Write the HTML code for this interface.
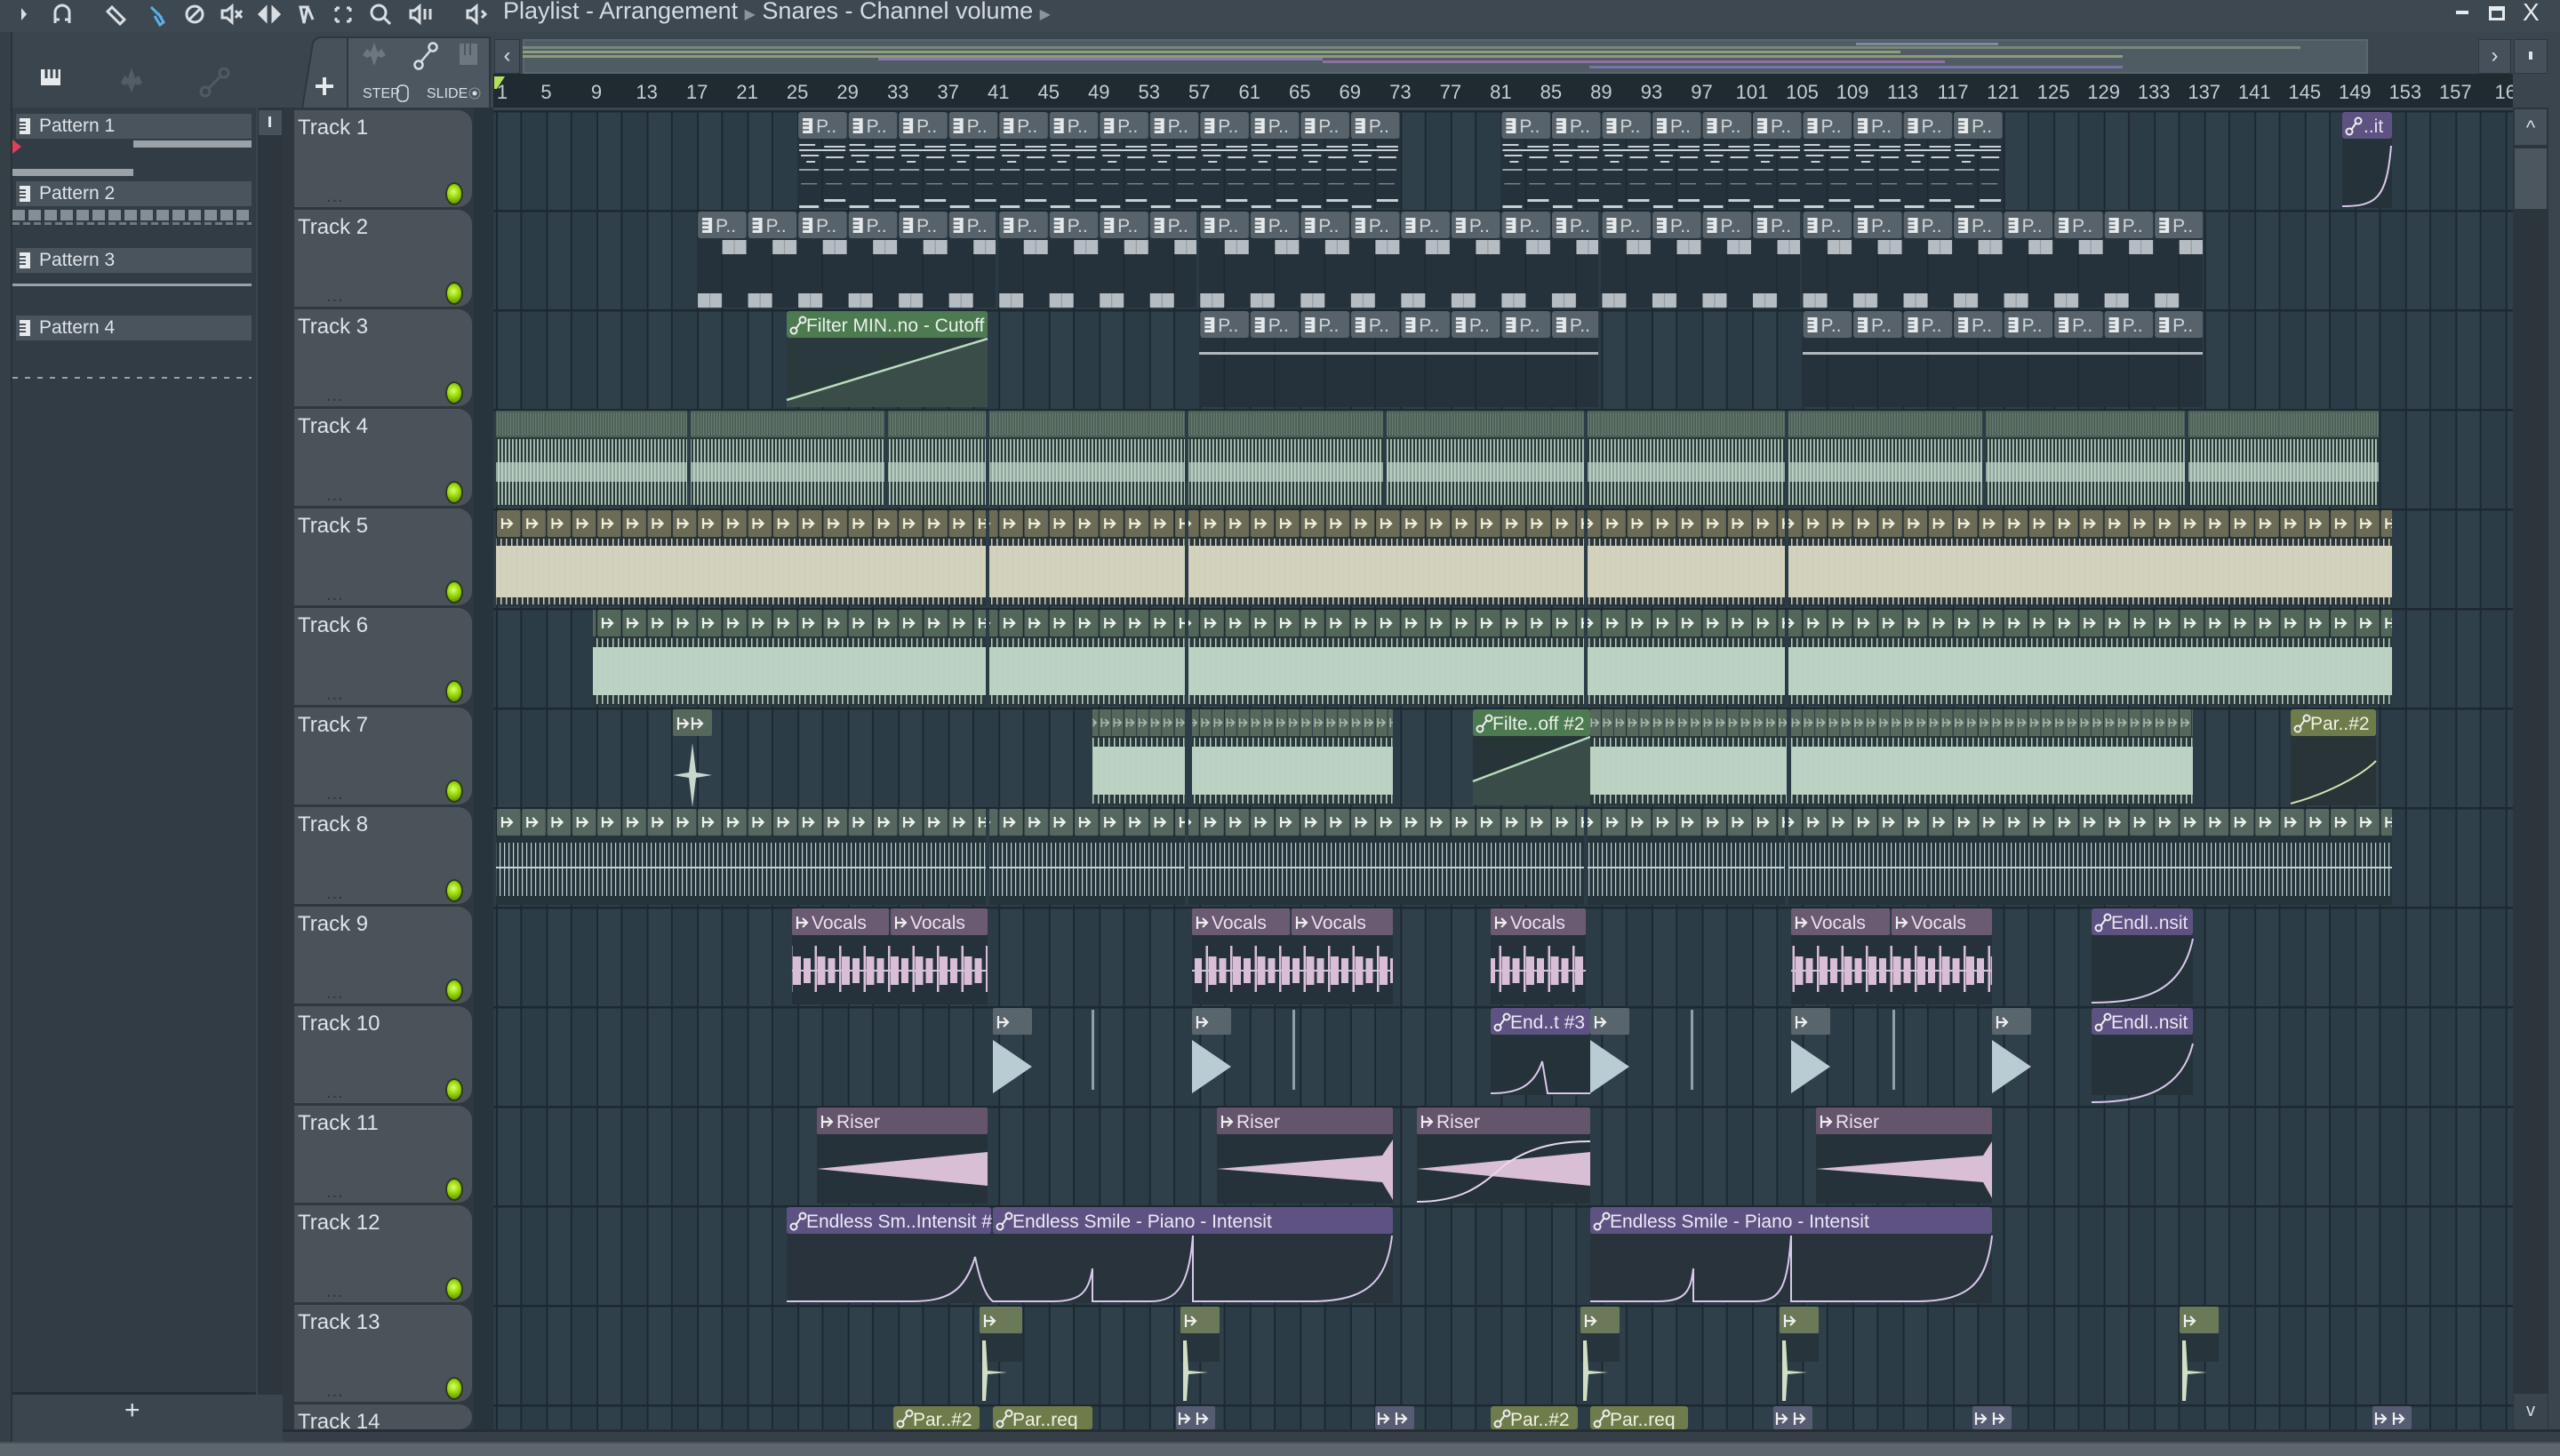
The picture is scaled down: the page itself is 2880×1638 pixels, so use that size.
<!DOCTYPE html>
<html><head><meta charset="utf-8">
<style>
*{box-sizing:border-box}
body{margin:0;width:2880px;height:1638px;overflow:hidden;background:#3b454d;font-family:"Liberation Sans Narrow","Liberation Sans",sans-serif;position:relative}
.abs{position:absolute}
.th{position:absolute;left:331px;width:200px;height:109px;background:#4b535a;border-radius:0 16px 16px 0;color:#dde3e7;font-size:24px;padding:6px 0 0 4px}
.th .led{position:absolute;right:10px;top:81px;width:20px;height:26px;border-radius:50%;background:radial-gradient(circle at 45% 40%,#d8ff70 0,#96d400 45%,#4c7a00 100%);border:2px solid #2c3a22}
.th .dots{position:absolute;left:36px;top:86px;color:#2e363c;font-size:20px;letter-spacing:1px}
.pn{position:absolute;left:18px;width:265px;height:28px;background:#4a545c;color:#dde3e7;font-size:21px;line-height:28px;padding-left:26px}
.pn:before{content:"";position:absolute;left:4px;top:5px;width:12px;height:18px;background:#e6eaec;box-shadow:inset 6px 0 0 -1px #e6eaec}
.pn i{position:absolute;left:4px;top:9px;width:7px;height:2px;background:#4a545c;box-shadow:0 4px 0 #4a545c,0 8px 0 #4a545c}
</style></head><body>

<!-- title bar -->
<div class="abs" style="left:0;top:0;width:2880px;height:36px;background:#3e4850"></div>
<svg class="abs" style="left:0;top:0" width="560" height="36" fill="none" stroke="#d8dee2" stroke-width="3">
<path d="M24 9l6 7-6 7" fill="#d8dee2" stroke="none"/>
<path d="M62 26V14a8 8 0 0 1 16 0v12M62 22h5M73 22h5"/>
<path d="M126 8l14 14-5 5-14-14zM121 13l5-5"/>
<path d="M170 8l12 12M174 18l6 10 4-3-6-10" stroke="#5ab0e8"/>
<circle cx="219" cy="16" r="9"/><path d="M213 22l12-12"/>
<path d="M250 12h5l6-5v18l-6-5h-5zM265 12l7 8M272 12l-7 8"/>
<path d="M292 16l7-7v14zM314 16l-7-7v14z" fill="#d8dee2"/>
<path d="M338 8h8l-4 18zM346 8l6 14"/>
<path d="M378 9h4M378 9v4M394 9h-4M394 9v4M378 24h4M378 24v-4M394 24h-4M394 24v-4"/>
<circle cx="426" cy="14" r="8"/><path d="M432 20l7 7"/>
<path d="M462 12h4l6-5v18l-6-5h-4zM478 10v12M484 10v12"/>
<path d="M526 12h4l6-5v18l-6-5h-4z"/><path d="M542 12l4 4-4 4"/>
</svg>
<div class="abs" style="left:566px;top:-3px;color:#d5dbe0;font-size:27px;white-space:nowrap">Playlist - Arrangement <span style="font-size:16px;color:#8a949b">▶</span> Snares - Channel volume <span style="font-size:16px;color:#8a949b">▶</span></div>
<div class="abs" style="left:2763px;top:12px;width:14px;height:4px;background:#e6eaec"></div>
<div class="abs" style="left:2800px;top:7px;width:18px;height:16px;border:3px solid #e6eaec;border-top-width:5px"></div>
<div class="abs" style="left:2838px;top:-2px;color:#e6eaec;font-size:28px">X</div>

<!-- left side -->
<div class="abs" style="left:0;top:36px;width:14px;height:1586px;background:#353f46;border-right:2px solid #2a3238"></div>
<svg class="abs" style="left:14px;top:36px" width="320" height="84">
<rect x="32" y="42" width="22" height="18" fill="#e6eaec"/><path d="M38 42v10M44 42v10M50 42v10" stroke="#3b454d" stroke-width="3"/>
<path d="M122 57l4-8 4 3 4-12 4 12 4-3 4 8-4 3-4-2-4 10-4-10-4 2z" fill="#525d65"/>
<circle cx="217" cy="67" r="5" stroke="#4f5a62" stroke-width="3" fill="none"/><circle cx="238" cy="46" r="5" stroke="#4f5a62" stroke-width="3" fill="none"/><path d="M221 63l13-13" stroke="#4f5a62" stroke-width="3"/>
</svg>
<div class="abs" style="left:14px;top:121px;width:304px;height:1448px;background:#323c44;border-bottom:3px solid #262e34"></div>
<div class="abs" style="left:288px;top:121px;width:30px;height:1448px;background:#2d363d;border-left:2px solid #3a444c"></div>
<div class="abs" style="left:291px;top:124px;width:26px;height:28px;background:#46515a"></div>
<div class="abs" style="left:302px;top:131px;width:3px;height:12px;background:#dde3e7"></div>
<div class="pn" style="top:128px"><i></i>Pattern 1</div>
<div class="abs" style="left:150px;top:158px;width:133px;height:8px;background:#9aa2a8"></div>
<div class="abs" style="left:14px;top:190px;width:136px;height:8px;background:#9aa2a8"></div>
<div class="abs" style="left:14px;top:157px;width:0;height:0;border-top:8px solid transparent;border-bottom:8px solid transparent;border-left:10px solid #e0405a"></div>
<div class="pn" style="top:204px"><i></i>Pattern 2</div>
<div class="abs" style="left:14px;top:236px;width:269px;height:12px;background:repeating-linear-gradient(90deg,#9aa2a8 0 14px,transparent 14px 18px);opacity:.8"></div>
<div class="abs" style="left:14px;top:250px;width:269px;height:3px;background:repeating-linear-gradient(90deg,#9aa2a8 0 8px,transparent 8px 12px);opacity:.6"></div>
<div class="pn" style="top:279px"><i></i>Pattern 3</div>
<div class="abs" style="left:14px;top:319px;width:269px;height:3px;background:#9aa2a8"></div>
<div class="pn" style="top:355px"><i></i>Pattern 4</div>
<div class="abs" style="left:14px;top:424px;width:269px;height:2px;background:repeating-linear-gradient(90deg,#9aa2a8 0 6px,transparent 6px 14px)"></div>
<div class="abs" style="left:140px;top:1570px;color:#dde3e7;font-size:30px">+</div>

<!-- tab + tools -->
<svg class="abs" style="left:330px;top:36px" width="230" height="86" font-family="Liberation Sans Narrow, Liberation Sans, sans-serif">
<path d="M10 86L22 12q3-6 10-6h29v80z" fill="#47515a" stroke="#2e373e" stroke-width="2"/>
<rect x="61" y="6" width="160" height="80" fill="#4d575f" stroke="#2e373e" stroke-width="2"/>
<path d="M35 51v20M25 61h20" stroke="#e6eaec" stroke-width="4"/>
<path d="M78 26l5-7 4 4 4-11 4 11 4-4 5 7-5 3-4-2-4 11-4-11-4 2z" fill="#6c777f"/>
<circle cx="141" cy="37" r="4.5" stroke="#d8dee2" stroke-width="2.5" fill="none"/><circle cx="157" cy="17" r="4.5" stroke="#d8dee2" stroke-width="2.5" fill="none"/><path d="M144 33l10-12" stroke="#d8dee2" stroke-width="2.5"/>
<rect x="187" y="13" width="20" height="24" fill="#6c777f"/><path d="M193 13v13M199 13v13" stroke="#4d575f" stroke-width="2"/>
<text x="78" y="74" fill="#d8dee2" font-size="16">STEP</text><rect x="117" y="60" width="12" height="18" rx="5" stroke="#d8dee2" stroke-width="1.5" fill="none"/>
<text x="150" y="74" fill="#d8dee2" font-size="16">SLIDE</text><circle cx="204" cy="69" r="6" stroke="#8a949b" fill="none"/><circle cx="204" cy="69" r="2.5" fill="#d8dee2"/>
</svg>
<!-- nav & overview -->
<div class="abs" style="left:556px;top:44px;width:29px;height:39px;background:#46505a;border:1px solid #2e373e;color:#d8dee2;font-size:24px;text-align:center;line-height:36px">‹</div>
<div class="abs" style="left:588px;top:44px;width:2076px;height:39px;background:#4f5c64;border:2px solid #5b676f"></div>
<svg class="abs" style="left:588px;top:44px" width="2076" height="39">
<rect x="0" y="8" width="2000" height="3" fill="#8c9a84" opacity=".7"/>
<rect x="0" y="13" width="1550" height="3" fill="#8aa17a"/>
<rect x="0" y="18" width="1800" height="3" fill="#a3a97e" opacity=".8"/>
<rect x="400" y="21" width="500" height="3" fill="#8679a8"/>
<rect x="900" y="24" width="700" height="3" fill="#8f6fa8"/>
<rect x="1200" y="30" width="600" height="3" fill="#7b72a8"/>
<rect x="1500" y="4" width="160" height="3" fill="#7d8aa0"/>
</svg>
<div class="abs" style="left:2788px;top:44px;width:37px;height:39px;background:#46505a;border:1px solid #2e373e;color:#d8dee2;font-size:24px;text-align:center;line-height:36px">›</div>
<div class="abs" style="left:2828px;top:44px;width:38px;height:39px;background:#46505a;border:1px solid #2e373e"></div>
<div class="abs" style="left:2845px;top:58px;width:4px;height:9px;background:#dde3e7"></div>

<!-- ruler -->
<div class="abs" style="left:555px;top:83px;width:2272px;height:38px;background:#1f2a31"></div>
<svg class="abs" style="left:555px;top:83px" width="2272" height="38" font-size="22" fill="#c4ccd1" text-anchor="middle" font-family="Liberation Sans Narrow, Liberation Sans, sans-serif">
<path d="M1 3h12l-9 14h-3z" fill="#b4e05a"/>
<text x="10" y="28">1</text><text x="59.5" y="28">5</text><text x="116" y="28">9</text><text x="172.6" y="28">13</text><text x="229.1" y="28">17</text><text x="285.6" y="28">21</text><text x="342.1" y="28">25</text><text x="398.6" y="28">29</text><text x="455.2" y="28">33</text><text x="511.7" y="28">37</text><text x="568.2" y="28">41</text><text x="624.7" y="28">45</text><text x="681.2" y="28">49</text><text x="737.8" y="28">53</text><text x="794.3" y="28">57</text><text x="850.8" y="28">61</text><text x="907.3" y="28">65</text><text x="963.8" y="28">69</text><text x="1020.4" y="28">73</text><text x="1076.9" y="28">77</text><text x="1133.4" y="28">81</text><text x="1189.9" y="28">85</text><text x="1246.4" y="28">89</text><text x="1303" y="28">93</text><text x="1359.5" y="28">97</text><text x="1416" y="28">101</text><text x="1472.5" y="28">105</text><text x="1529" y="28">109</text><text x="1585.6" y="28">113</text><text x="1642.1" y="28">117</text><text x="1698.6" y="28">121</text><text x="1755.1" y="28">125</text><text x="1811.6" y="28">129</text><text x="1868.2" y="28">133</text><text x="1924.7" y="28">137</text><text x="1981.2" y="28">141</text><text x="2037.7" y="28">145</text><text x="2094.2" y="28">149</text><text x="2150.8" y="28">153</text><text x="2207.3" y="28">157</text><text x="2263.8" y="28">16</text>
</svg>

<!-- track header column -->
<div class="abs" style="left:318px;top:121px;width:237px;height:1487px;background:#2f383f"></div>
<div class="abs" style="left:533px;top:121px;width:22px;height:1487px;background:#28343c"></div>
<div class="th" style="top:124px">Track 1<span class="dots">...</span><span class="led"></span></div>
<div class="th" style="top:236px">Track 2<span class="dots">...</span><span class="led"></span></div>
<div class="th" style="top:348px">Track 3<span class="dots">...</span><span class="led"></span></div>
<div class="th" style="top:460px">Track 4<span class="dots">...</span><span class="led"></span></div>
<div class="th" style="top:572px">Track 5<span class="dots">...</span><span class="led"></span></div>
<div class="th" style="top:684px">Track 6<span class="dots">...</span><span class="led"></span></div>
<div class="th" style="top:796px">Track 7<span class="dots">...</span><span class="led"></span></div>
<div class="th" style="top:908px">Track 8<span class="dots">...</span><span class="led"></span></div>
<div class="th" style="top:1020px">Track 9<span class="dots">...</span><span class="led"></span></div>
<div class="th" style="top:1132px">Track 10<span class="dots">...</span><span class="led"></span></div>
<div class="th" style="top:1244px">Track 11<span class="dots">...</span><span class="led"></span></div>
<div class="th" style="top:1356px">Track 12<span class="dots">...</span><span class="led"></span></div>
<div class="th" style="top:1468px">Track 13<span class="dots">...</span><span class="led"></span></div>
<div class="th" style="top:1580px;height:28px;overflow:hidden">Track 14</div>

<!-- right scrollbar -->
<div class="abs" style="left:2827px;top:121px;width:40px;height:1487px;background:#2c353c"></div>
<div class="abs" style="left:2828px;top:122px;width:38px;height:42px;background:#46505a;border:1px solid #2e373e;color:#d8dee2;font-size:22px;text-align:center;line-height:42px">^</div>
<div class="abs" style="left:2828px;top:166px;width:38px;height:70px;background:#4b565e;border:1px solid #2e373e"></div>
<div class="abs" style="left:2828px;top:1568px;width:38px;height:40px;background:#3a444c;color:#d8dee2;font-size:20px;text-align:center;line-height:38px">v</div>

<!-- bottom -->
<div class="abs" style="left:318px;top:1608px;width:2562px;height:14px;background:#363f47;border-top:3px solid #262e34"></div>
<div class="abs" style="left:0;top:1622px;width:2880px;height:16px;background:#5d656d;border-top:2px solid #4a525a"></div>

<!-- grid -->
<svg class="abs" style="left:555px;top:124px" width="2272" height="1484" font-family="Liberation Sans Narrow, Liberation Sans, sans-serif" font-size="21">
<defs>
<pattern id="g" width="56.52" height="112" patternUnits="userSpaceOnUse" patternTransform="translate(3,0)">
<rect width="56.52" height="112" fill="#2f404b"/><rect x="28.26" width="28.26" height="112" fill="#2c3c47"/>
<rect x="0" width="2" height="112" fill="#1d2830"/><rect x="27.3" width="2" height="112" fill="#1d2830"/>
<rect width="56.52" height="2.5" fill="#1d2830"/></pattern>
<pattern id="pc" width="56.52" height="112" patternUnits="userSpaceOnUse" patternTransform="translate(3,0)">
<rect x="1" y="2" width="54.5" height="30" rx="3" fill="#57626a"/>
<rect x="6" y="9" width="11" height="17" fill="#e6eaec"/><path d="M6 13h7M6 17.5h7M6 22h7" stroke="#57626a" stroke-width="1.6"/>
<text x="21" y="25" fill="#cfd6da">P..</text></pattern>
<pattern id="p1b" width="56.52" height="112" patternUnits="userSpaceOnUse" patternTransform="translate(3,0)">
<rect y="32" width="56.52" height="78" fill="#25323b"/><rect x="27.3" y="32" width="1.5" height="78" fill="#1d2830"/>
<g fill="#c8d0d4"><rect x="2" y="38" width="18" height="2"/><rect x="30" y="40" width="24" height="2"/><rect x="2" y="44" width="52" height="2"/><rect x="4" y="50" width="20" height="2"/><rect x="32" y="52" width="20" height="2"/><rect x="10" y="57" width="10" height="2"/><rect x="2" y="66" width="22" height="2" opacity=".7"/><rect x="30" y="66" width="22" height="2" opacity=".7"/><rect x="4" y="82" width="18" height="1.5" opacity=".5"/><rect x="32" y="82" width="18" height="1.5" opacity=".5"/><rect x="30" y="100" width="24" height="3"/><rect x="2" y="107" width="22" height="3"/></g></pattern>
<pattern id="p2b" width="56.52" height="112" patternUnits="userSpaceOnUse" patternTransform="translate(3,0)">
<rect y="32" width="56.52" height="78" fill="#25323b"/><rect x="27.3" y="32" width="1.5" height="78" fill="#1d2830"/>
<rect x="28.5" y="34" width="27" height="16" fill="#b6bdc2"/><rect x="1" y="94" width="27" height="16" fill="#b6bdc2"/>
<rect x="41.5" y="34" width="1" height="16" fill="#8d959b"/><rect x="14" y="94" width="1" height="16" fill="#8d959b"/></pattern>
<pattern id="p3b" width="56.52" height="112" patternUnits="userSpaceOnUse" patternTransform="translate(3,0)">
<rect y="32" width="56.52" height="78" fill="#25323b"/><rect x="27.3" y="32" width="1.5" height="78" fill="#1d2830"/>
<rect y="48" width="56.52" height="3" fill="#b0b8bd"/></pattern>
<pattern id="h4" width="28.26" height="112" patternUnits="userSpaceOnUse" patternTransform="translate(3,0)">
<rect y="2" width="28.26" height="30" fill="#4b5e55"/><rect x="0" y="2" width="28.26" height="30" fill="url(#st)"/></pattern>
<pattern id="st" width="3" height="112" patternUnits="userSpaceOnUse"><rect x="1" y="4" width="1" height="26" fill="#6f8578"/></pattern>
<pattern id="w4" width="4" height="112" patternUnits="userSpaceOnUse">
<rect y="32" width="4" height="78" fill="#2a3a38"/><rect x="1" y="34" width="1.8" height="74" fill="#b2c8bc"/><rect x="0" y="60" width="4" height="22" fill="#c0d6ca" opacity=".7"/></pattern>
<pattern id="ai5" width="28.26" height="112" patternUnits="userSpaceOnUse" patternTransform="translate(3,0)">
<rect x="1" y="2" width="26.5" height="30" rx="2" fill="#6c6b55"/><path d="M7 11v12M7 17h11M13 12l5 5-5 5" stroke="#f2f0dc" stroke-width="2.2" fill="none"/></pattern>
<pattern id="ai6" width="28.26" height="112" patternUnits="userSpaceOnUse" patternTransform="translate(3,0)">
<rect x="1" y="2" width="26.5" height="30" rx="2" fill="#52665a"/><path d="M7 11v12M7 17h11M13 12l5 5-5 5" stroke="#eef4ee" stroke-width="2.2" fill="none"/></pattern>
<pattern id="ai7" width="14.13" height="112" patternUnits="userSpaceOnUse" patternTransform="translate(3,0)">
<rect x="0.5" y="2" width="13" height="30" fill="#56685c"/><path d="M3 12v10M3 17h7M7 13l4 4-4 4" stroke="#a8b8ac" stroke-width="1.6" fill="none"/></pattern>
<pattern id="ai8" width="28.26" height="112" patternUnits="userSpaceOnUse" patternTransform="translate(3,0)">
<rect x="1" y="2" width="26.5" height="30" rx="2" fill="#56675f"/><path d="M7 11v12M7 17h11M13 12l5 5-5 5" stroke="#eef4f2" stroke-width="2.2" fill="none"/></pattern>
<pattern id="w5" width="6" height="112" patternUnits="userSpaceOnUse">
<rect y="32" width="6" height="78" fill="#2a353a"/><rect y="42" width="6" height="58" fill="#d3d2bd"/><rect x="2" y="34" width="1.5" height="74" fill="#cfcdb8"/></pattern>
<pattern id="w6" width="6" height="112" patternUnits="userSpaceOnUse">
<rect y="32" width="6" height="78" fill="#2a383a"/><rect y="44" width="6" height="54" fill="#bcd2c3"/><rect x="2" y="34" width="1.5" height="74" fill="#b8cfc0"/></pattern>
<pattern id="w8" width="5" height="112" patternUnits="userSpaceOnUse">
<rect y="32" width="5" height="78" fill="#25333a"/><rect x="2" y="40" width="1.2" height="60" fill="#c3d5d3"/><rect y="67" width="5" height="2" fill="#c3d5d3"/></pattern>
<pattern id="vo" width="27.5" height="112" patternUnits="userSpaceOnUse" patternTransform="translate(3,0)">
<rect y="32" width="27.5" height="78" fill="#26323b"/><rect y="71" width="27.5" height="2" fill="#d8bfd7"/>
<rect x="1" y="44" width="2.5" height="52" fill="#d8bfd7"/><rect x="4" y="56" width="9" height="32" fill="#d8bfd7"/><rect x="16" y="58" width="8" height="28" fill="#d8bfd7"/></pattern>
<g id="ic"><path d="M6 9v14M6 16h11M12 11l5 5-5 5" stroke="#eeeeee" stroke-width="2.2" fill="none"/></g>
<g id="lk" stroke="#eeeeee" stroke-width="2" fill="none"><circle cx="6" cy="22" r="3.5"/><circle cx="16" cy="10" r="3.5"/><path d="M8.5 19.5l5-7"/></g>
</defs>
<rect width="2272" height="1484" fill="url(#g)"/>

<!-- T1 -->
<rect x="342" y="0" width="678" height="32" fill="url(#pc)"/><rect x="342" y="32" width="678" height="78" fill="url(#p1b)"/>
<rect x="1133" y="0" width="566" height="32" fill="url(#pc)"/><rect x="1133" y="32" width="566" height="78" fill="url(#p1b)"/>
<rect x="2080" y="32" width="56" height="78" fill="#26323a"/><rect x="2080" y="2" width="56" height="30" rx="3" fill="#5e5283"/><use href="#lk" x="2082" y="2"/><text x="2104" y="25" fill="#e6e0f0">..it</text>
<path d="M2080 108C2118 108 2130 100 2135 40" stroke="#d8c8ec" stroke-width="2" fill="none"/>

<!-- T2 -->
<g><rect x="229" y="112" width="336" height="32" fill="url(#pc)"/><rect x="229" y="144" width="336" height="78" fill="url(#p2b)"/>
<rect x="568" y="112" width="223" height="32" fill="url(#pc)"/><rect x="568" y="144" width="223" height="78" fill="url(#p2b)"/>
<rect x="794" y="112" width="449" height="32" fill="url(#pc)"/><rect x="794" y="144" width="449" height="78" fill="url(#p2b)"/>
<rect x="1247" y="112" width="223" height="32" fill="url(#pc)"/><rect x="1247" y="144" width="223" height="78" fill="url(#p2b)"/>
<rect x="1473" y="112" width="450" height="32" fill="url(#pc)"/><rect x="1473" y="144" width="450" height="78" fill="url(#p2b)"/></g>

<!-- T3 -->
<rect x="330" y="256" width="226" height="78" fill="#2a3a3c"/>
<path d="M330 326L556 257V334H330z" fill="#3a4d48"/><path d="M330 326L556 257" stroke="#b8dcc0" stroke-width="2.5"/>
<rect x="330" y="226" width="226" height="30" rx="3" fill="#4d7a51"/><use href="#lk" x="332" y="226"/><text x="352" y="249" fill="#e8f2e8">Filter MIN..no - Cutoff</text>
<rect x="794" y="224" width="449" height="32" fill="url(#pc)"/><rect x="794" y="256" width="449" height="78" fill="url(#p3b)"/>
<rect x="1473" y="224" width="450" height="32" fill="url(#pc)"/><rect x="1473" y="256" width="450" height="78" fill="url(#p3b)"/>

<!-- T4 -->
<g>
<rect x="3" y="336" width="215" height="32" fill="url(#h4)"/><rect x="3" y="368" width="215" height="78" fill="url(#w4)"/>
<rect x="222" y="336" width="218" height="32" fill="url(#h4)"/><rect x="222" y="368" width="218" height="78" fill="url(#w4)"/>
<rect x="444" y="336" width="110" height="32" fill="url(#h4)"/><rect x="444" y="368" width="110" height="78" fill="url(#w4)"/>
<rect x="558" y="336" width="220" height="32" fill="url(#h4)"/><rect x="558" y="368" width="220" height="78" fill="url(#w4)"/>
<rect x="782" y="336" width="219" height="32" fill="url(#h4)"/><rect x="782" y="368" width="219" height="78" fill="url(#w4)"/>
<rect x="1005" y="336" width="222" height="32" fill="url(#h4)"/><rect x="1005" y="368" width="222" height="78" fill="url(#w4)"/>
<rect x="1231" y="336" width="222" height="32" fill="url(#h4)"/><rect x="1231" y="368" width="222" height="78" fill="url(#w4)"/>
<rect x="1457" y="336" width="218" height="32" fill="url(#h4)"/><rect x="1457" y="368" width="218" height="78" fill="url(#w4)"/>
<rect x="1679" y="336" width="224" height="32" fill="url(#h4)"/><rect x="1679" y="368" width="224" height="78" fill="url(#w4)"/>
<rect x="1907" y="336" width="214" height="32" fill="url(#h4)"/><rect x="1907" y="368" width="214" height="78" fill="url(#w4)"/>
</g>

<!-- T5 -->
<g>
<rect x="3" y="448" width="551" height="32" fill="url(#ai5)"/><rect x="3" y="480" width="551" height="78" fill="url(#w5)"/>
<rect x="558" y="448" width="220" height="32" fill="url(#ai5)"/><rect x="558" y="480" width="220" height="78" fill="url(#w5)"/>
<rect x="782" y="448" width="445" height="32" fill="url(#ai5)"/><rect x="782" y="480" width="445" height="78" fill="url(#w5)"/>
<rect x="1231" y="448" width="222" height="32" fill="url(#ai5)"/><rect x="1231" y="480" width="222" height="78" fill="url(#w5)"/>
<rect x="1457" y="448" width="679" height="32" fill="url(#ai5)"/><rect x="1457" y="480" width="679" height="78" fill="url(#w5)"/>
</g>
<!-- T6 -->
<g>
<rect x="112" y="560" width="442" height="32" fill="url(#ai6)"/><rect x="112" y="592" width="442" height="78" fill="url(#w6)"/>
<rect x="558" y="560" width="220" height="32" fill="url(#ai6)"/><rect x="558" y="592" width="220" height="78" fill="url(#w6)"/>
<rect x="782" y="560" width="445" height="32" fill="url(#ai6)"/><rect x="782" y="592" width="445" height="78" fill="url(#w6)"/>
<rect x="1231" y="560" width="222" height="32" fill="url(#ai6)"/><rect x="1231" y="592" width="222" height="78" fill="url(#w6)"/>
<rect x="1457" y="560" width="679" height="32" fill="url(#ai6)"/><rect x="1457" y="592" width="679" height="78" fill="url(#w6)"/>
</g>
<!-- T7 -->
<g>
<rect x="202" y="674" width="44" height="30" rx="2" fill="#56685c"/><use href="#ic" x="202" y="674"/><use href="#ic" x="218" y="674"/>
<path d="M224 712L228 745L246 748L228 751L224 784L220 751L202 748L220 745Z" fill="#c6d8cc"/>
<rect x="674" y="672" width="104" height="32" fill="url(#ai7)"/><rect x="674" y="704" width="104" height="78" fill="url(#w6)"/>
<rect x="786" y="672" width="226" height="32" fill="url(#ai7)"/><rect x="786" y="704" width="226" height="78" fill="url(#w6)"/>
<rect x="1102" y="704" width="132" height="78" fill="#283538"/><path d="M1102 755L1234 705V782H1102z" fill="#3a4c47"/><path d="M1102 755L1234 705" stroke="#b8dcc0" stroke-width="2.5"/>
<rect x="1102" y="674" width="132" height="30" rx="3" fill="#4d7a51"/><use href="#lk" x="1104" y="674"/><text x="1124" y="697" fill="#e8f2e8">Filte..off #2</text>
<rect x="1234" y="672" width="221" height="32" fill="url(#ai7)"/><rect x="1234" y="704" width="221" height="78" fill="url(#w6)"/>
<rect x="1460" y="672" width="452" height="32" fill="url(#ai7)"/><rect x="1460" y="704" width="452" height="78" fill="url(#w6)"/>
<rect x="2022" y="704" width="96" height="78" fill="#283438"/><path d="M2022 780C2060 770 2100 750 2118 732" stroke="#d6e0b0" stroke-width="2" fill="none"/>
<rect x="2022" y="674" width="96" height="30" rx="3" fill="#6e7c4c"/><use href="#lk" x="2024" y="674"/><text x="2044" y="697" fill="#f0f2e0">Par..#2</text>
</g>
<!-- T8 -->
<g>
<rect x="3" y="784" width="551" height="32" fill="url(#ai8)"/><rect x="3" y="816" width="551" height="78" fill="url(#w8)"/>
<rect x="558" y="784" width="220" height="32" fill="url(#ai8)"/><rect x="558" y="816" width="220" height="78" fill="url(#w8)"/>
<rect x="782" y="784" width="445" height="32" fill="url(#ai8)"/><rect x="782" y="816" width="445" height="78" fill="url(#w8)"/>
<rect x="1231" y="784" width="222" height="32" fill="url(#ai8)"/><rect x="1231" y="816" width="222" height="78" fill="url(#w8)"/>
<rect x="1457" y="784" width="679" height="32" fill="url(#ai8)"/><rect x="1457" y="816" width="679" height="78" fill="url(#w8)"/>
</g>
<!-- T9 vocals -->
<g fill="#ece0ee">
<rect x="336" y="928" width="220" height="78" fill="url(#vo)"/>
<rect x="336" y="898" width="109" height="30" rx="2" fill="#6a5a72"/><use href="#ic" x="336" y="898"/><text x="358" y="921">Vocals</text>
<rect x="447" y="898" width="109" height="30" rx="2" fill="#6a5a72"/><use href="#ic" x="447" y="898"/><text x="469" y="921">Vocals</text>
<rect x="786" y="928" width="226" height="78" fill="url(#vo)"/>
<rect x="786" y="898" width="110" height="30" rx="2" fill="#6a5a72"/><use href="#ic" x="786" y="898"/><text x="808" y="921">Vocals</text>
<rect x="898" y="898" width="114" height="30" rx="2" fill="#6a5a72"/><use href="#ic" x="898" y="898"/><text x="920" y="921">Vocals</text>
<rect x="1122" y="928" width="107" height="78" fill="url(#vo)"/>
<rect x="1122" y="898" width="107" height="30" rx="2" fill="#6a5a72"/><use href="#ic" x="1122" y="898"/><text x="1144" y="921">Vocals</text>
<rect x="1460" y="928" width="226" height="78" fill="url(#vo)"/>
<rect x="1460" y="898" width="111" height="30" rx="2" fill="#6a5a72"/><use href="#ic" x="1460" y="898"/><text x="1482" y="921">Vocals</text>
<rect x="1573" y="898" width="113" height="30" rx="2" fill="#6a5a72"/><use href="#ic" x="1573" y="898"/><text x="1595" y="921">Vocals</text>
<rect x="1798" y="928" width="114" height="78" fill="#26323a"/><path d="M1798 1004C1860 1004 1900 990 1912 932" stroke="#d8c8ec" stroke-width="2" fill="none"/>
<rect x="1798" y="898" width="114" height="30" rx="3" fill="#5e5283"/><use href="#lk" x="1800" y="898"/><text x="1820" y="921">Endl..nsit</text>
</g>
<!-- T10 -->
<g fill="#ece8f2">
<rect x="562" y="1010" width="44" height="30" rx="2" fill="#59656d"/><use href="#ic" x="562" y="1010"/><path d="M562 1046L606 1076L562 1106Z" fill="#b9ccd4"/>
<rect x="673" y="1012" width="3" height="90" fill="#8ea0a8"/>
<rect x="786" y="1010" width="44" height="30" rx="2" fill="#59656d"/><use href="#ic" x="786" y="1010"/><path d="M786 1046L830 1076L786 1106Z" fill="#b9ccd4"/>
<rect x="899" y="1012" width="3" height="90" fill="#8ea0a8"/>
<rect x="1122" y="1040" width="112" height="68" fill="#26323a"/><path d="M1122 1106C1150 1106 1170 1100 1180 1070L1186 1106H1234" stroke="#d8c8ec" stroke-width="2" fill="none"/>
<rect x="1122" y="1010" width="112" height="30" rx="3" fill="#5e5283"/><use href="#lk" x="1124" y="1010"/><text x="1144" y="1033">End..t #3</text>
<rect x="1234" y="1010" width="44" height="30" rx="2" fill="#59656d"/><use href="#ic" x="1234" y="1010"/><path d="M1234 1046L1278 1076L1234 1106Z" fill="#b9ccd4"/>
<rect x="1347" y="1012" width="3" height="90" fill="#8ea0a8"/>
<rect x="1460" y="1010" width="44" height="30" rx="2" fill="#59656d"/><use href="#ic" x="1460" y="1010"/><path d="M1460 1046L1504 1076L1460 1106Z" fill="#b9ccd4"/>
<rect x="1574" y="1012" width="3" height="90" fill="#8ea0a8"/>
<rect x="1686" y="1010" width="44" height="30" rx="2" fill="#59656d"/><use href="#ic" x="1686" y="1010"/><path d="M1686 1046L1730 1076L1686 1106Z" fill="#b9ccd4"/>
<rect x="1798" y="1040" width="114" height="68" fill="#26323a"/><path d="M1798 1116C1860 1116 1900 1100 1912 1050" stroke="#d8c8ec" stroke-width="2" fill="none"/>
<rect x="1798" y="1010" width="114" height="30" rx="3" fill="#5e5283"/><use href="#lk" x="1800" y="1010"/><text x="1820" y="1033">Endl..nsit</text>
</g>
<!-- T11 risers -->
<g fill="#ece0ee">
<rect x="364" y="1152" width="192" height="78" fill="#26323a"/><path d="M364 1191L556 1172V1210Z" fill="#d8bfd6"/>
<rect x="364" y="1122" width="192" height="30" rx="2" fill="#64546c"/><use href="#ic" x="364" y="1122"/><text x="386" y="1145">Riser</text>
<rect x="814" y="1152" width="198" height="78" fill="#26323a"/><path d="M814 1191L1000 1176L1012 1158V1226L1000 1206Z" fill="#d8bfd6"/>
<rect x="814" y="1122" width="198" height="30" rx="2" fill="#64546c"/><use href="#ic" x="814" y="1122"/><text x="836" y="1145">Riser</text>
<rect x="1039" y="1152" width="195" height="78" fill="#26323a"/><path d="M1039 1191L1234 1172V1210Z" fill="#d8bfd6"/>
<path d="M1039 1228C1100 1228 1120 1200 1140 1185C1170 1165 1200 1160 1234 1160" stroke="#e8d8ee" stroke-width="2" fill="none"/>
<rect x="1039" y="1122" width="195" height="30" rx="2" fill="#64546c"/><use href="#ic" x="1039" y="1122"/><text x="1061" y="1145">Riser</text>
<rect x="1488" y="1152" width="198" height="78" fill="#26323a"/><path d="M1488 1191L1676 1176L1686 1160V1224L1676 1206Z" fill="#d8bfd6"/>
<rect x="1488" y="1122" width="198" height="30" rx="2" fill="#64546c"/><use href="#ic" x="1488" y="1122"/><text x="1510" y="1145">Riser</text>
</g>
<!-- T12 -->
<g fill="#ece8f6">
<rect x="330" y="1264" width="682" height="78" fill="#28333c"/><rect x="1234" y="1264" width="452" height="78" fill="#28333c"/>
<path d="M330 1340L470 1340C510 1340 530 1330 542 1290C548 1320 555 1335 562 1340L630 1340C660 1340 670 1330 674 1303L674 1340L740 1340C770 1340 783 1320 787 1266L787 1340L920 1340C980 1340 1005 1320 1011 1266" stroke="#d8c8ec" stroke-width="2" fill="none"/>
<path d="M1234 1340L1310 1340C1340 1340 1347 1330 1350 1303L1350 1340L1420 1340C1450 1340 1456 1320 1460 1266L1460 1340L1600 1340C1660 1340 1680 1320 1686 1266" stroke="#d8c8ec" stroke-width="2" fill="none"/>
<rect x="330" y="1234" width="230" height="30" rx="3" fill="#5e5283"/><use href="#lk" x="332" y="1234"/><text x="352" y="1257">Endless Sm..Intensit #2</text>
<rect x="562" y="1234" width="450" height="30" rx="3" fill="#5e5283"/><use href="#lk" x="564" y="1234"/><text x="584" y="1257">Endless Smile - Piano - Intensit</text>
<rect x="1234" y="1234" width="452" height="30" rx="3" fill="#5e5283"/><use href="#lk" x="1236" y="1234"/><text x="1256" y="1257">Endless Smile - Piano - Intensit</text>
</g>
<!-- T13 -->
<g fill="#d3dfc4">
<rect x="547" y="1346" width="48" height="30" rx="2" fill="#6a7a58"/><use href="#ic" x="547" y="1346"/><rect x="547" y="1376" width="48" height="32" fill="#27343b"/><path d="M550 1384H554L556 1418L578 1420L556 1422L554 1452H550Z"/>
<rect x="773" y="1346" width="44" height="30" rx="2" fill="#6a7a58"/><use href="#ic" x="773" y="1346"/><rect x="773" y="1376" width="44" height="32" fill="#27343b"/><path d="M776 1384H780L782 1418L804 1420L782 1422L780 1452H776Z"/>
<rect x="1223" y="1346" width="44" height="30" rx="2" fill="#6a7a58"/><use href="#ic" x="1223" y="1346"/><rect x="1223" y="1376" width="44" height="32" fill="#27343b"/><path d="M1226 1384H1230L1232 1418L1254 1420L1232 1422L1230 1452H1226Z"/>
<rect x="1447" y="1346" width="44" height="30" rx="2" fill="#6a7a58"/><use href="#ic" x="1447" y="1346"/><rect x="1447" y="1376" width="44" height="32" fill="#27343b"/><path d="M1450 1384H1454L1456 1418L1478 1420L1456 1422L1454 1452H1450Z"/>
<rect x="1897" y="1346" width="44" height="30" rx="2" fill="#6a7a58"/><use href="#ic" x="1897" y="1346"/><rect x="1897" y="1376" width="44" height="32" fill="#27343b"/><path d="M1900 1384H1904L1906 1418L1928 1420L1906 1422L1904 1452H1900Z"/>
</g>
<!-- T14 -->
<g fill="#f0f2e0">
<rect x="450" y="1458" width="97" height="26" rx="3" fill="#6e7c4c"/><use href="#lk" x="452" y="1456"/><text x="472" y="1480">Par..#2</text>
<rect x="562" y="1458" width="112" height="26" rx="3" fill="#6e7c4c"/><use href="#lk" x="564" y="1456"/><text x="584" y="1480">Par..req</text>
<rect x="768" y="1458" width="44" height="26" rx="2" fill="#565d73"/><use href="#ic" x="766" y="1456"/><use href="#ic" x="786" y="1456"/>
<rect x="992" y="1458" width="44" height="26" rx="2" fill="#565d73"/><use href="#ic" x="990" y="1456"/><use href="#ic" x="1010" y="1456"/>
<rect x="1122" y="1458" width="98" height="26" rx="3" fill="#6e7c4c"/><use href="#lk" x="1124" y="1456"/><text x="1144" y="1480">Par..#2</text>
<rect x="1234" y="1458" width="110" height="26" rx="3" fill="#6e7c4c"/><use href="#lk" x="1236" y="1456"/><text x="1256" y="1480">Par..req</text>
<rect x="1440" y="1458" width="44" height="26" rx="2" fill="#565d73"/><use href="#ic" x="1438" y="1456"/><use href="#ic" x="1458" y="1456"/>
<rect x="1664" y="1458" width="44" height="26" rx="2" fill="#565d73"/><use href="#ic" x="1662" y="1456"/><use href="#ic" x="1682" y="1456"/>
<rect x="2114" y="1458" width="44" height="26" rx="2" fill="#565d73"/><use href="#ic" x="2112" y="1456"/><use href="#ic" x="2132" y="1456"/>
</g>
</svg>
</body></html>
